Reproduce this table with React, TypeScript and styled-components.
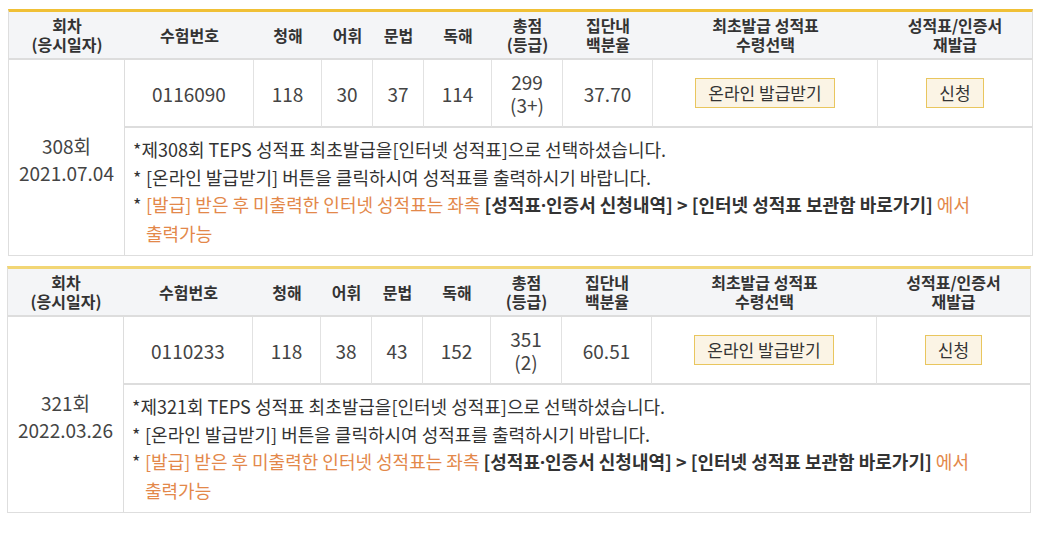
import React from "react";
import styled, { createGlobalStyle } from "styled-components";

const GlobalStyle = createGlobalStyle`
  html, body { margin: 0; padding: 0; background: #ffffff; }
  body {
    font-family: "Noto Sans CJK KR", "Noto Sans", sans-serif;
    color: #333333;
  }
  * { box-sizing: border-box; }
`;

const Page = styled.div`
  display: flex;
  flex-direction: column;
  gap: 10px;
  padding: 9px 7px 8px 8px;
`;

const Table = styled.div<{ $accent: string; $shift?: number }>`
  display: grid;
  grid-template-columns: 116px 129px 68px 51px 51px 68px 71px 90px 225px 1fr;
  grid-template-rows: 48px 68px 127px;
  border-top: 3px solid ${(p) => p.$accent};
  border-left: 1px solid #dedede;
  border-right: 1px solid #dedede;
  border-bottom: 1px solid #dedede;
  margin-left: ${(p) => p.$shift ?? 0}px;
  margin-right: ${(p) => -(p.$shift ?? 0) * 2}px;
`;

const HeadCell = styled.div`
  display: flex;
  align-items: center;
  justify-content: center;
  text-align: center;
  background: #f4f5f7;
  border-bottom: 2px solid #dddddd;
  font-size: 16px;
  font-weight: 700;
  line-height: 19px;
  color: #333333;
`;

const RoundCell = styled.div`
  grid-row: span 2;
  display: flex;
  align-items: center;
  justify-content: center;
  text-align: center;
  font-size: 19px;
  line-height: 27px;
  color: #444444;
  border-right: 1px solid #dddddd;
  padding-top: 3px;
`;

const DataCell = styled.div<{ $last?: boolean }>`
  display: flex;
  align-items: center;
  justify-content: center;
  text-align: center;
  font-size: 19px;
  line-height: 23px;
  color: #444444;
  border-right: ${(p) => (p.$last ? "none" : "1px solid #e2e2e2")};
  border-bottom: 2px solid #dddddd;
`;

const Button = styled.button`
  height: 30px;
  padding: 0 12px;
  background: #fbf4e5;
  border: 1px solid #e9c65e;
  font-family: "Noto Sans CJK KR", "Noto Sans", sans-serif;
  font-size: 17px;
  color: #333333;
  line-height: 28px;
  cursor: pointer;
`;

const Notes = styled.div`
  grid-column: span 9;
  display: flex;
  flex-direction: column;
  padding: 8px 8px 0 8px;
  font-size: 18px;
  line-height: 27.5px;
  color: #333333;
`;

const NoteLine = styled.div`
  display: flex;
  white-space: nowrap;
`;

const Star = styled.span`
  flex: none;
  width: 13px;
`;

const Orange = styled.span`
  color: #e3884a;
`;

const Strong = styled.b`
  font-weight: 700;
  color: #333333;
`;

const Dot = styled.span`
  font-family: "Noto Sans", sans-serif;
`;

type Row = {
  accent: string;
  shift?: number;
  round: string;
  date: string;
  id: string;
  l: string;
  v: string;
  g: string;
  r: string;
  total: string;
  grade: string;
  pct: string;
};

const rows: Row[] = [
  {
    accent: "#f0c036",
    round: "308",
    date: "2021.07.04",
    id: "0116090",
    l: "118",
    v: "30",
    g: "37",
    r: "114",
    total: "299",
    grade: "(3+)",
    pct: "37.70",
  },
  {
    accent: "#f2d675",
    shift: -1,
    round: "321",
    date: "2022.03.26",
    id: "0110233",
    l: "118",
    v: "38",
    g: "43",
    r: "152",
    total: "351",
    grade: "(2)",
    pct: "60.51",
  },
];

const ScoreTable: React.FC<{ row: Row }> = ({ row }) => (
  <Table $accent={row.accent} $shift={row.shift}>
    <HeadCell>
      회차
      <br />
      (응시일자)
    </HeadCell>
    <HeadCell>수험번호</HeadCell>
    <HeadCell>청해</HeadCell>
    <HeadCell>어휘</HeadCell>
    <HeadCell>문법</HeadCell>
    <HeadCell>독해</HeadCell>
    <HeadCell>
      총점
      <br />
      (등급)
    </HeadCell>
    <HeadCell>
      집단내
      <br />
      백분율
    </HeadCell>
    <HeadCell>
      최초발급 성적표
      <br />
      수령선택
    </HeadCell>
    <HeadCell>
      성적표/인증서
      <br />
      재발급
    </HeadCell>

    <RoundCell>
      {row.round}회
      <br />
      {row.date}
    </RoundCell>
    <DataCell>{row.id}</DataCell>
    <DataCell>{row.l}</DataCell>
    <DataCell>{row.v}</DataCell>
    <DataCell>{row.g}</DataCell>
    <DataCell>{row.r}</DataCell>
    <DataCell>
      {row.total}
      <br />
      {row.grade}
    </DataCell>
    <DataCell>{row.pct}</DataCell>
    <DataCell>
      <Button>온라인 발급받기</Button>
    </DataCell>
    <DataCell $last>
      <Button>신청</Button>
    </DataCell>

    <Notes>
      <NoteLine>
        *제{row.round}회 TEPS 성적표 최초발급을[인터넷 성적표]으로 선택하셨습니다.
      </NoteLine>
      <NoteLine>
        <Star>*</Star>[온라인 발급받기] 버튼을 클릭하시여 성적표를 출력하시기 바랍니다.
      </NoteLine>
      <NoteLine>
        <Star>*</Star>
        <Orange>
          [발급] 받은 후 미출력한 인터넷 성적표는 좌측{" "}
          <Strong>
            [성적표<Dot>·</Dot>인증서 신청내역] &gt; [인터넷 성적표 보관함 바로가기]
          </Strong>{" "}
          에서
          <br />
          출력가능
        </Orange>
      </NoteLine>
    </Notes>
  </Table>
);

export default function App() {
  return (
    <>
      <GlobalStyle />
      <Page>
        {rows.map((r) => (
          <ScoreTable key={r.round} row={r} />
        ))}
      </Page>
    </>
  );
}
